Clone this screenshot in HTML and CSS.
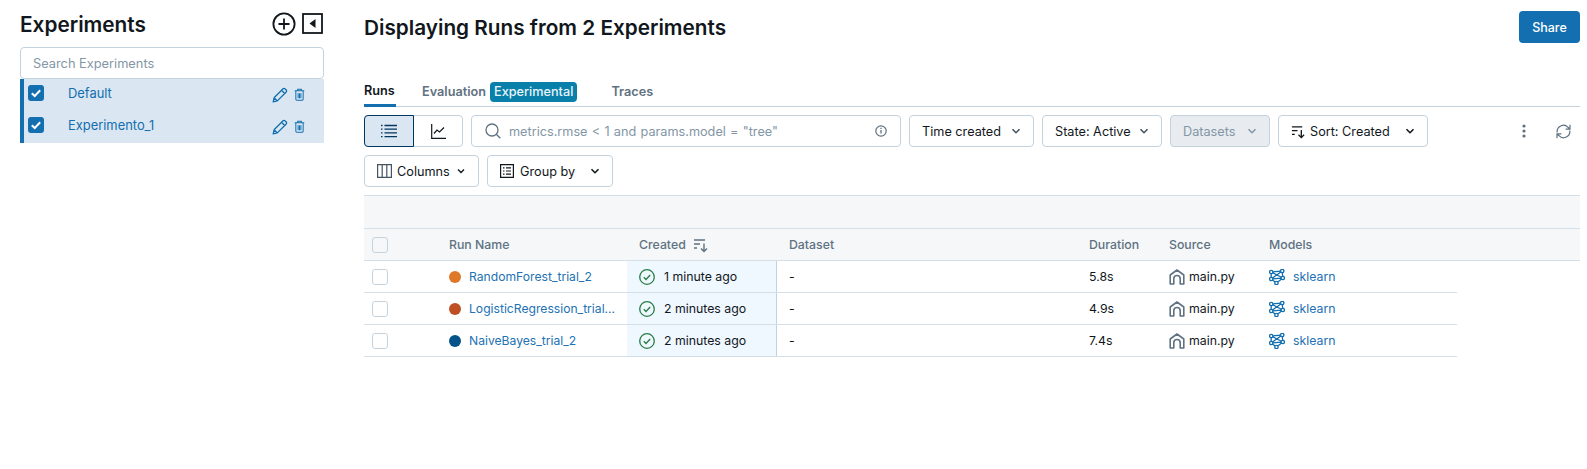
FILE: index.html
```html
<!DOCTYPE html>
<html lang="en">
<head>
<meta charset="UTF-8" />
<title>Experiments</title>
<link rel="stylesheet" href="styles.css">
</head>
<body>
<svg class="defs" width="0" height="0">
  <symbol id="chev" viewBox="0 0 16 16"><path d="M4 6l4 4 4-4" fill="none" stroke="currentColor" stroke-width="1.8"/></symbol>
  <symbol id="sort" viewBox="0 0 16 16"><path d="M1 3h11M1 7h6M1 11h3M11 6.500v8M8 11.500l3 3 3-3" fill="none" stroke="currentColor" stroke-width="1.400"/></symbol>
  <symbol id="pencil" viewBox="0 0 16 16"><path d="M1.200 14.800l.9-4L10.800 2a1.700 1.700 0 0 1 2.400 0l.8.8a1.700 1.700 0 0 1 0 2.400l-8.700 8.700zM9.500 3.300l3.200 3.200M2.100 10.800l3.100 3.100" fill="none" stroke="currentColor" stroke-width="1.300" stroke-linejoin="round"/></symbol>
  <symbol id="trash" viewBox="0 0 12 14"><path d="M.8 3h10.400M4 3V1.200h4V3M2 3v9.300c0 .5.300.9.800.9h6.400c.5 0 .8-.4.800-.9V3M4.500 5.500v5.500M6 5.500v5.500M7.500 5.500v5.500" fill="none" stroke="currentColor" stroke-width="1.100"/></symbol>
  <symbol id="check" viewBox="0 0 16 16"><circle cx="8" cy="8" r="7.300" fill="none" stroke="currentColor" stroke-width="1.300"/><path d="M4.800 8.200l2.200 2.200 4.200-4.400" fill="none" stroke="currentColor" stroke-width="1.400"/></symbol>
  <symbol id="house" viewBox="0 0 16 16"><path d="M1.200 15V6L8 1l6.800 5v9h-3.600V9.700a3.200 3.200 0 0 0-6.400 0V15z" fill="none" stroke="currentColor" stroke-width="1.600" stroke-linejoin="round"/></symbol>
  <symbol id="model" viewBox="0 0 16 16"><g fill="none" stroke="currentColor" stroke-width="1.300"><circle cx="2.200" cy="3" r="1.700"/><circle cx="13.200" cy="2" r="1.700"/><circle cx="2.200" cy="10" r="1.700"/><circle cx="13.800" cy="9" r="1.700"/><circle cx="7.400" cy="14" r="1.700"/><path d="M3.900 2.900l7.600-.8M3.800 3.700l8.500 4.500M2.200 4.700v3.600M3.900 9.900l8.200-.8M3.500 11l2.600 1.900M11.800 3l-8.300 6M8.800 13l3.800-2.900M13.300 3.700l.4 3.600"/></g></symbol>
</svg>

<div class="page">
  <aside class="sidebar">
    <div class="side-head">
      <h1>Experiments</h1>
      <svg class="plus-icon" width="24" height="24" viewBox="0 0 24 24"><circle cx="12" cy="12" r="10.600" fill="none" stroke="#11171c" stroke-width="1.800"/><path d="M12 6.500v11M6.500 12h11" stroke="#11171c" stroke-width="1.800"/></svg>
      <svg class="collapse-icon" width="21" height="21" viewBox="0 0 21 21"><rect x="1" y="1" width="19" height="19" fill="none" stroke="#11171c" stroke-width="1.800"/><path d="M13.500 6v9l-6-4.500z" fill="#11171c"/></svg>
    </div>
    <div class="side-search">Search Experiments</div>
    <ul class="exp-list">
      <li class="exp-row">
        <span class="exp-check"><svg width="16" height="16" viewBox="0 0 16 16"><path d="M3.800 8.300l2.900 2.700 5.500-5.800" fill="none" stroke="#fff" stroke-width="2"/></svg></span>
        <span class="exp-name">Default</span>
        <svg class="exp-edit" width="16" height="16"><use href="#pencil"/></svg>
        <svg class="exp-trash" width="11" height="13"><use href="#trash"/></svg>
      </li>
      <li class="exp-row">
        <span class="exp-check"><svg width="16" height="16" viewBox="0 0 16 16"><path d="M3.800 8.300l2.900 2.700 5.500-5.800" fill="none" stroke="#fff" stroke-width="2"/></svg></span>
        <span class="exp-name">Experimento_1</span>
        <svg class="exp-edit" width="16" height="16"><use href="#pencil"/></svg>
        <svg class="exp-trash" width="11" height="13"><use href="#trash"/></svg>
      </li>
    </ul>
  </aside>

  <main class="content">
    <div class="title-row">
      <h2>Displaying Runs from 2 Experiments</h2>
      <button class="share">Share</button>
    </div>

    <div class="tabs">
      <span class="tab active">Runs</span>
      <span class="tab eval">Evaluation</span>
      <span class="tag">Experimental</span>
      <span class="tab traces">Traces</span>
    </div>

    <div class="toolbar">
      <div class="view-toggle">
        <span class="view-btn on">
          <svg width="16" height="14" viewBox="0 0 16 14"><path d="M0 1.500h1.500M3.500 1.500H16M0 5.200h1.500M3.500 5.200H16M0 8.900h1.500M3.500 8.900H16M0 12.600h1.500M3.500 12.600H16" stroke="#04355d" stroke-width="1.300"/></svg>
        </span>
        <span class="view-btn">
          <svg width="15" height="15" viewBox="0 0 15 15"><path d="M.7 0v14.300H15M3 9.500l3-3.500 2.500 2 4.500-4.500" fill="none" stroke="#11171c" stroke-width="1.200"/></svg>
        </span>
      </div>
      <div class="run-search">
        <svg width="16" height="16" viewBox="0 0 16 16"><circle cx="7" cy="7" r="6" fill="none" stroke="#5f7281" stroke-width="1.300"/><path d="M11.300 11.300l4 4" stroke="#5f7281" stroke-width="1.300"/></svg>
        <span class="run-query">metrics.rmse &lt; 1 and params.model = "tree"</span>
        <svg width="12" height="12" viewBox="0 0 12 12"><circle cx="6" cy="6" r="5.200" fill="none" stroke="#5f7281" stroke-width="1.200"/><path d="M6 5v3.500M6 2.800v1.200" stroke="#5f7281" stroke-width="1.300"/></svg>
      </div>
      <button class="tool w-time">Time created <svg class="chev dim" width="14" height="14"><use href="#chev"/></svg></button>
      <button class="tool w-state">State: Active <svg class="chev dim" width="14" height="14"><use href="#chev"/></svg></button>
      <button class="tool w-data off">Datasets <svg class="chev" width="14" height="14"><use href="#chev"/></svg></button>
      <button class="tool w-sort"><svg width="15" height="15"><use href="#sort"/></svg>Sort: Created <svg class="chev" width="14" height="14"><use href="#chev"/></svg></button>
      <svg class="more" width="4" height="14" viewBox="0 0 4 14"><circle cx="2" cy="2" r="1.600" fill="#5f7281"/><circle cx="2" cy="7" r="1.600" fill="#5f7281"/><circle cx="2" cy="12" r="1.600" fill="#5f7281"/></svg>
      <svg class="refresh" width="15" height="15" viewBox="0 0 15 15"><path d="M1.200 8.500a6.300 6.300 0 0 1 10.800-5.200l1.800 1.600M13.800 6.500A6.300 6.300 0 0 1 3 11.700l-1.800-1.600M14 .8v4.400H9.600M1 14.200V9.800h4.400" fill="none" stroke="#5f7281" stroke-width="1.200"/></svg>
    </div>

    <div class="toolbar second">
      <button class="tool w-cols">
        <svg width="15" height="14" viewBox="0 0 15 14"><path d="M.6.600h13.800v12.800H.6zM5.200.600v12.800M9.800.600v12.800" fill="none" stroke="#445461" stroke-width="1.200"/></svg>
        Columns <svg class="chev" width="12" height="12"><use href="#chev"/></svg>
      </button>
      <button class="tool w-group">
        <svg width="14" height="14" viewBox="0 0 14 14"><path d="M.6.600h12.800v12.800H.6z" fill="none" stroke="#11171c" stroke-width="1.200"/><path d="M3 3.800h1.500M6 3.800h5M3 7h1.500M6 7h5M3 10.200h1.500M6 10.200h5" stroke="#11171c" stroke-width="1.200"/></svg>
        Group by <svg class="chev gb" width="14" height="14"><use href="#chev"/></svg>
      </button>
    </div>

    <div class="band"></div>

    <div class="grid-head">
      <span class="c-sel"><i class="box head-box"></i></span>
      <span class="c-name">Run Name</span>
      <span class="c-created">Created <svg width="16" height="16"><use href="#sort"/></svg></span>
      <span class="c-data">Dataset</span>
      <span class="c-dur">Duration</span>
      <span class="c-src">Source</span>
      <span class="c-model">Models</span>
    </div>

    <div class="grid-row">
      <span class="c-sel"><i class="box"></i></span>
      <span class="c-name"><i class="dot orange"></i><a>RandomForest_trial_2</a></span>
      <span class="c-created"><svg class="ok" width="16" height="16"><use href="#check"/></svg>1 minute ago</span>
      <span class="c-data">-</span>
      <span class="c-dur">5.8s</span>
      <span class="c-src"><svg width="16" height="16"><use href="#house"/></svg>main.py</span>
      <span class="c-model"><svg width="16" height="16"><use href="#model"/></svg><a>sklearn</a></span>
    </div>
    <div class="grid-row">
      <span class="c-sel"><i class="box"></i></span>
      <span class="c-name"><i class="dot rust"></i><a>LogisticRegression_trial...</a></span>
      <span class="c-created"><svg class="ok" width="16" height="16"><use href="#check"/></svg>2 minutes ago</span>
      <span class="c-data">-</span>
      <span class="c-dur">4.9s</span>
      <span class="c-src"><svg width="16" height="16"><use href="#house"/></svg>main.py</span>
      <span class="c-model"><svg width="16" height="16"><use href="#model"/></svg><a>sklearn</a></span>
    </div>
    <div class="grid-row">
      <span class="c-sel"><i class="box"></i></span>
      <span class="c-name"><i class="dot navy"></i><a>NaiveBayes_trial_2</a></span>
      <span class="c-created"><svg class="ok" width="16" height="16"><use href="#check"/></svg>2 minutes ago</span>
      <span class="c-data">-</span>
      <span class="c-dur">7.4s</span>
      <span class="c-src"><svg width="16" height="16"><use href="#house"/></svg>main.py</span>
      <span class="c-model"><svg width="16" height="16"><use href="#model"/></svg><a>sklearn</a></span>
    </div>
  </main>
</div>
</body>
</html>
```

FILE: styles.css
```css
* {
  box-sizing: border-box;
}

body {
  margin: 0;
  font-family: Inter, "Liberation Sans", sans-serif;
  font-size: 12.3px;
  color: #11171c;
  background-color: #fff;
}

.defs {
  position: absolute;
}

.page {
  display: flex;
  height: 469px;
  overflow: hidden;
}

/* sidebar */
.sidebar {
  width: 304px;
  margin-left: 20px;
  flex-shrink: 0;
}

.side-head {
  display: flex;
  align-items: center;
  height: 47px;
}

.side-head h1 {
  flex: 1;
  margin: 2px 0 0;
  font-size: 20.8px;
  font-weight: 600;
}

.plus-icon {
  margin-right: 6px;
  margin-top: 1px;
}

.collapse-icon {
  margin-right: 1px;
}

.side-search {
  height: 32px;
  padding: 0 12px;
  line-height: 31px;
  border: 1px solid #c4d2de;
  border-radius: 4px;
  color: #8396a5;
  font-size: 12.8px;
}

.exp-list {
  list-style: none;
  margin: 0;
  padding: 0;
  background-color: #dae6f1;
  border-left: 4px solid #136fb0;
}

.exp-row {
  display: flex;
  align-items: flex-start;
  height: 32px;
  padding-left: 4px;
  color: #136fb0;
  font-size: 12.9px;
}

.exp-check {
  display: flex;
  width: 16px;
  height: 16px;
  margin-top: 6px;
  background-color: #136fb0;
  border-radius: 3px;
}

.exp-name {
  width: 204px;
  margin-left: 24px;
  line-height: 29px;
}

.exp-edit {
  margin-top: 8px;
}

.exp-trash {
  margin: 9px 0 0 6px;
}

/* main area */
.content {
  width: 1216px;
  margin-left: 40px;
  flex-shrink: 0;
}

.title-row {
  display: flex;
  justify-content: space-between;
  align-items: center;
  padding-top: 11px;
}

.title-row h2 {
  margin: 1px 0 0;
  font-size: 20.75px;
  font-weight: 600;
}

.share {
  width: 61px;
  height: 32px;
  padding: 0;
  border: 0;
  border-radius: 4px;
  background-color: #136fb0;
  color: #fff;
  font: 500 12.5px Inter, sans-serif;
}

.tabs {
  display: flex;
  align-items: center;
  height: 32px;
  margin-top: 32px;
  padding-top: 1px;
  border-bottom: 1px solid #c4d2de;
  font-size: 12.7px;
  font-weight: 600;
}

.tab {
  color: #5f7281;
}

.tab.active {
  position: relative;
  align-self: flex-end;
  width: 32px;
  height: 31px;
  line-height: 31px;
  color: #11171c;
}

.tab.active::after {
  content: "";
  position: absolute;
  left: 0;
  right: 0;
  bottom: -1px;
  height: 3px;
  background-color: #136fb0;
}

.tab.eval {
  margin-left: 26px;
}

.tag {
  height: 20px;
  margin: 1px 0 0 4px;
  padding: 0 4px;
  line-height: 20px;
  font-weight: 500;
  border-radius: 4px;
  background-color: #0880aa;
  color: #e8f4f8;
}

.tab.traces {
  margin-left: 34px;
}

.toolbar {
  display: flex;
  align-items: center;
  gap: 8px;
  margin-top: 8px;
  font-size: 12.7px;
}

.view-toggle {
  display: flex;
  width: 99px;
  height: 32px;
  border: 1px solid #c4d2de;
  border-radius: 4px;
}

.view-btn {
  display: flex;
  flex: 1;
  align-items: center;
  justify-content: center;
}

.view-btn.on {
  flex: none;
  width: 50px;
  margin: -1px 0 -1px -1px;
  border: 1px solid #04355d;
  border-radius: 4px 0 0 4px;
  background-color: #dae6f1;
}

.run-search {
  display: flex;
  align-items: center;
  width: 430px;
  height: 32px;
  padding: 0 13px;
  border: 1px solid #c4d2de;
  border-radius: 4px;
  color: #8396a5;
}

.run-query {
  flex: 1;
  margin-left: 8px;
  word-spacing: 0.7px;
}

.tool {
  display: flex;
  align-items: center;
  height: 32px;
  padding: 0 0 0 12px;
  border: 1px solid #c4d2de;
  border-radius: 4px;
  background-color: #fff;
  color: #11171c;
  font: 400 12.7px Inter, sans-serif;
  white-space: nowrap;
}

.tool svg {
  flex-shrink: 0;
}

.tool .chev {
  margin-left: auto;
  margin-right: 10px;
}

.chev.dim {
  color: #445461;
}

.tool.off {
  background-color: #e8ecf0;
  color: #8396a5;
}

.w-time { width: 125px; }
.w-state { width: 120px; }
.w-data { width: 100px; }
.w-sort { width: 150px; gap: 4px; }
.w-cols { width: 115px; gap: 5px; }
.w-group { width: 126px; gap: 6px; }

.w-cols .chev {
  margin-right: 15px;
}

.more {
  margin-left: 86px;
}

.refresh {
  margin-left: 22px;
}

.band {
  height: 34px;
  margin-top: 8px;
  border-top: 1px solid #d5dfe7;
  border-bottom: 1px solid #d5dfe7;
  background-color: #f5f7f9;
}

.grid-head, .grid-row {
  display: flex;
  align-items: center;
  height: 32px;
  border-bottom: 1px solid #d5dfe7;
}

.grid-head {
  background-color: #f5f7f9;
  color: #5f7281;
  font-weight: 500;
}

.grid-row {
  width: 1093px;
}

.grid-head > span, .grid-row > span {
  display: flex;
  align-items: center;
  height: 100%;
}

.c-sel {
  width: 77px;
  padding-left: 8px;
}

.c-name {
  width: 186px;
  padding-left: 8px;
}

.c-name a {
  font-size: 12.15px;
}

.c-created {
  width: 150px;
  padding-left: 12px;
}

.grid-head .c-created svg {
  margin-left: 7px;
}

.grid-row .c-created {
  background-color: #f0f8ff;
  border-right: 1px solid #c4d2de;
}

.ok {
  margin-right: 9px;
  color: #277c43;
}

.c-data {
  width: 304px;
  padding-left: 12px;
}

.c-dur {
  width: 80px;
  padding-left: 8px;
}

.c-src {
  width: 100px;
  padding-left: 8px;
}

.c-src svg {
  margin-right: 4px;
  color: #5f7281;
}

.c-model {
  width: 196px;
  padding-left: 8px;
}

.c-model svg {
  margin-right: 8px;
  color: #136fb0;
}

.box {
  display: block;
  width: 16px;
  height: 16px;
  border: 1px solid #c4d2de;
  border-radius: 3px;
  background-color: #fff;
}

.head-box {
  background-color: #f5f7f9;
}

.dot {
  width: 12px;
  height: 12px;
  margin-right: 8px;
  border-radius: 50%;
}

.orange { background-color: #e0782a; }
.rust { background-color: #bf4f25; }
.navy { background-color: #06528a; }

a {
  color: #2272b4;
}
```
